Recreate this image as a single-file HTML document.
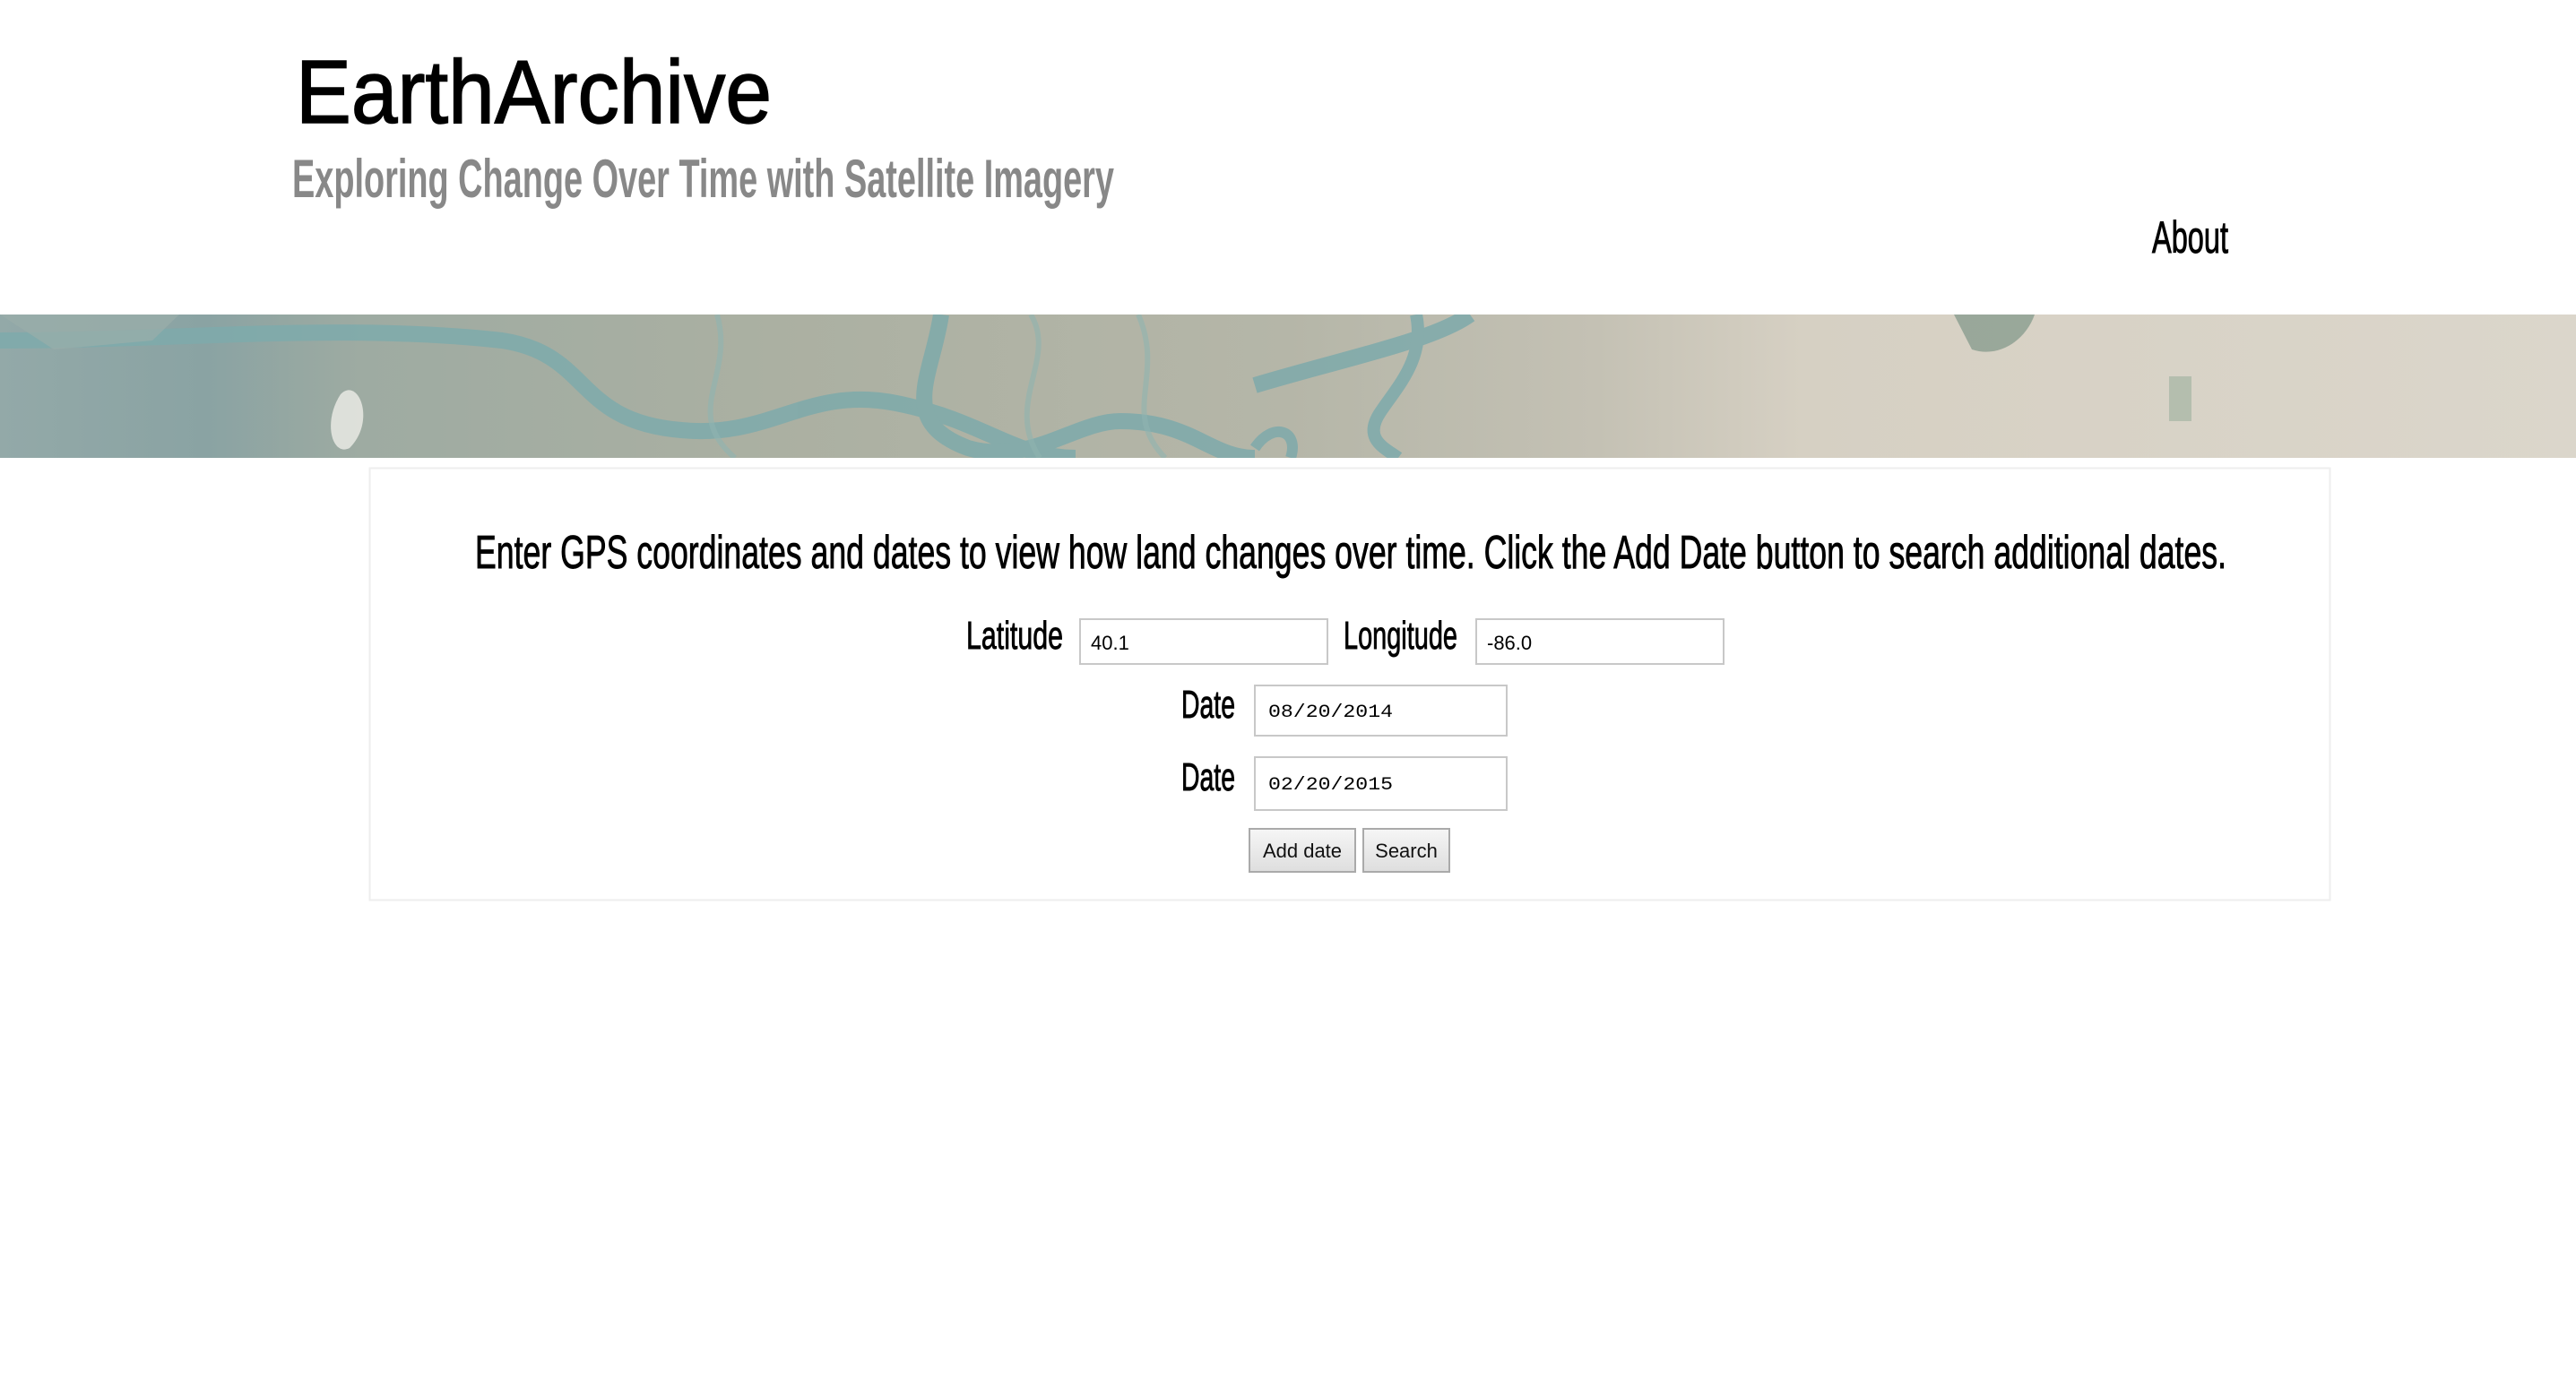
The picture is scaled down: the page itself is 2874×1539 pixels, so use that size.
<!DOCTYPE html>
<html><head><meta charset="utf-8"><style>
html,body{margin:0;padding:0;background:#fff;width:2874px;height:1539px;overflow:hidden}
svg{display:block}
</style></head><body>
<svg width="2874" height="1539" viewBox="0 0 2874 1539" xmlns="http://www.w3.org/2000/svg" font-family="Liberation Sans, sans-serif">
<defs>
<linearGradient id="ban" x1="0" x2="1" y1="0" y2="0">
<stop offset="0" stop-color="#93a9a8"/>
<stop offset="0.08" stop-color="#8aa3a3"/>
<stop offset="0.14" stop-color="#9eaba2"/>
<stop offset="0.3" stop-color="#abb0a2"/>
<stop offset="0.5" stop-color="#b5b6a8"/>
<stop offset="0.62" stop-color="#c4c1b4"/>
<stop offset="0.7" stop-color="#d6d0c3"/>
<stop offset="1" stop-color="#dbd6cb"/>
</linearGradient>
<linearGradient id="btn" x1="0" x2="0" y1="0" y2="1">
<stop offset="0" stop-color="#f6f6f6"/><stop offset="1" stop-color="#dedede"/>
</linearGradient>
<clipPath id="bc"><rect x="0" y="351" width="2874" height="160"/></clipPath>
</defs>
<!-- header -->
<text x="330" y="137" font-size="100" textLength="531" lengthAdjust="spacingAndGlyphs" fill="#000" stroke="#000" stroke-width="1.5">EarthArchive</text>
<text x="326" y="220" font-size="60" font-weight="bold" textLength="917" lengthAdjust="spacingAndGlyphs" fill="#888">Exploring Change Over Time with Satellite Imagery</text>
<text x="2401" y="282" font-size="50" textLength="85" lengthAdjust="spacingAndGlyphs" fill="#000" stroke="#000" stroke-width="1">About</text>
<!-- banner -->
<g clip-path="url(#bc)">
<rect x="0" y="351" width="2874" height="160" fill="url(#ban)"/>
<g fill="none" stroke="#7eaaab" stroke-width="18" opacity="0.85">
<path d="M0 380 C200 380 380 360 560 380 C660 395 640 470 760 480 C860 490 900 430 1000 450 C1100 470 1130 511 1200 511"/>
<path d="M1050 351 C1040 420 1000 470 1080 500 C1150 520 1200 470 1250 470 C1330 470 1350 511 1400 511"/>
<path d="M1400 430 C1500 400 1600 380 1640 351"/>
<path d="M1580 351 C1590 400 1560 430 1540 460 C1520 490 1545 500 1560 511" stroke-width="14"/>
<path d="M1400 500 C1420 470 1450 480 1440 511" stroke-width="12"/>
</g>
<g fill="none" stroke="#8fb4b0" stroke-width="6" opacity="0.6">
<path d="M800 351 C820 420 760 460 820 511"/>
<path d="M1150 351 C1180 400 1120 450 1160 511"/>
<path d="M1270 351 C1300 420 1250 460 1300 511"/>
</g>
<path d="M0 351 L200 351 L170 380 L60 390 Z" fill="#9aaeaa" opacity="0.7"/>
<path d="M380 440 C400 420 420 470 390 500 C370 510 360 470 380 440Z" fill="#e4e6e0" opacity="0.9"/>
<path d="M2180 351 L2270 351 C2260 380 2230 400 2200 390Z" fill="#7f9688" opacity="0.7"/>
<rect x="2420" y="420" width="25" height="50" fill="#9db09c" opacity="0.6"/>
</g>
<!-- card -->
<rect x="412.5" y="522.5" width="2187" height="482" fill="#fff" stroke="#eeeeee" stroke-width="2"/>
<text x="530" y="634" font-size="52" textLength="1954" lengthAdjust="spacingAndGlyphs" fill="#000" stroke="#000" stroke-width="0.9">Enter GPS coordinates and dates to view how land changes over time. Click the Add Date button to search additional dates.</text>
<g stroke="#000" stroke-width="0.9">
<text x="1078" y="724" font-size="44" textLength="108" lengthAdjust="spacingAndGlyphs" fill="#000">Latitude</text>
<text x="1499" y="724" font-size="44" textLength="127" lengthAdjust="spacingAndGlyphs" fill="#000">Longitude</text>
<text x="1318" y="801" font-size="44" textLength="60" lengthAdjust="spacingAndGlyphs" fill="#000">Date</text>
<text x="1318" y="882" font-size="44" textLength="60" lengthAdjust="spacingAndGlyphs" fill="#000">Date</text>
</g>
<rect x="1205" y="691" width="276" height="50" fill="#fff" stroke="#c8c8c8" stroke-width="2"/>
<text x="1217" y="725" font-size="22" fill="#000">40.1</text>
<rect x="1647" y="691" width="276" height="50" fill="#fff" stroke="#c8c8c8" stroke-width="2"/>
<text x="1659" y="725" font-size="22" fill="#000">-86.0</text>
<rect x="1400" y="765" width="281" height="56" fill="#fff" stroke="#c8c8c8" stroke-width="2"/>
<text x="1415" y="800" font-size="20" font-family="Liberation Mono, monospace" textLength="139" lengthAdjust="spacingAndGlyphs" fill="#000">08/20/2014</text>
<rect x="1400" y="845" width="281" height="59" fill="#fff" stroke="#c8c8c8" stroke-width="2"/>
<text x="1415" y="881" font-size="20" font-family="Liberation Mono, monospace" textLength="139" lengthAdjust="spacingAndGlyphs" fill="#000">02/20/2015</text>
<rect x="1394" y="925" width="118" height="48" fill="url(#btn)" stroke="#aaaaaa" stroke-width="2"/>
<text x="1453" y="957" font-size="22" text-anchor="middle" fill="#111">Add date</text>
<rect x="1521" y="925" width="96" height="48" fill="url(#btn)" stroke="#aaaaaa" stroke-width="2"/>
<text x="1569" y="957" font-size="22" text-anchor="middle" fill="#111">Search</text>
</svg>
</body></html>
